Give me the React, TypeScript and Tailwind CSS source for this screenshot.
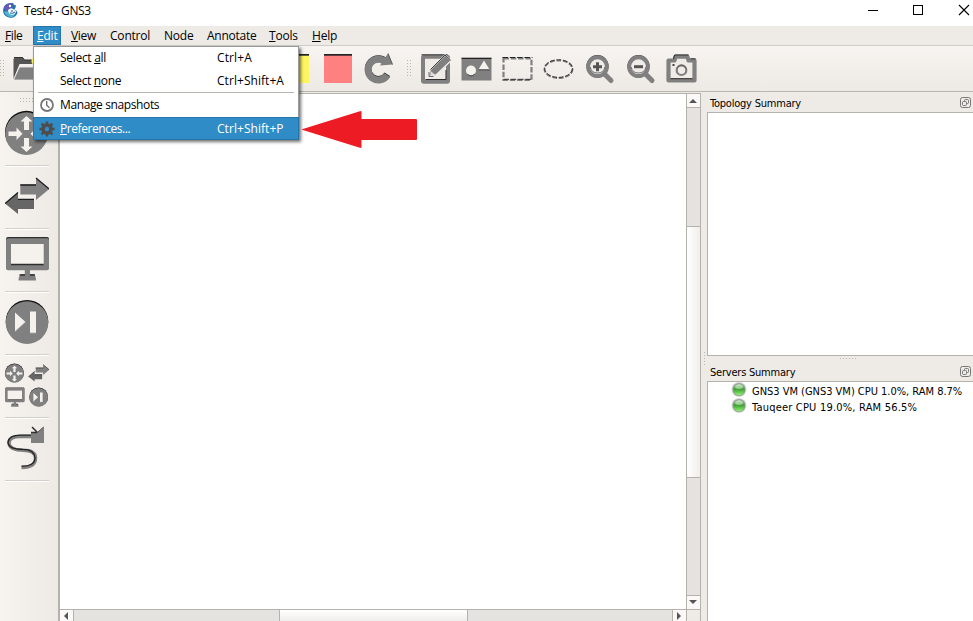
import type { ReactNode } from 'react';

const SHADOW = '#2e2e2e';
const GREY = '#808080';
const PAPER = '#f5f2ee';

interface SlotProps {
  children?: ReactNode;
}

// Toolbar slot, origin is the centre of the button
const Slot = ({ children }: SlotProps) => (
  <svg className="block h-[45px] w-[41px] shrink-0" viewBox="-20.5 -23 41 45">
    {children}
  </svg>
);

const DeviceButton = ({ children }: SlotProps) => (
  <div className="h-[63px] shrink-0 border-b border-[#d3cfca] shadow-[0_1px_0_#ffffff]">
    <svg className="block h-[62px] w-[44px]" viewBox="0 0 44 62">
      {children}
    </svg>
  </div>
);

const Dots = ({ cols, rows }: { cols: number; rows: number }) => (
  <svg className="block shrink-0" width={cols * 3} height={rows * 3} shapeRendering="crispEdges">
    {Array.from({ length: cols * rows }, (_, i) => (
      <rect key={i} x={(i % cols) * 3} y={Math.floor(i / cols) * 3} width="1" height="1" fill="#b9b5b0" />
    ))}
  </svg>
);

const inward = 'M-2.5 -17H-2.5V-11.5H-6L0 -17L6 -11.5H2.5V-3H-2.5V-11.5Z';

const Router = () => (
  <g transform="translate(21.5 30)">
    <circle r="21.5" cy="-.7" fill="#111" />
    <circle r="21.3" cy=".6" fill={GREY} />
    <path d={inward} fill={PAPER} />
    <path d={inward} fill={PAPER} transform="translate(0 2) rotate(180)" />
    <path d="M-18 -1.5H-10V-5.5L-4 .8L-10 7V3H-18ZM18 -1.5H10V-5.5L4 .8L10 7V3H18Z" fill={PAPER} />
  </g>
);

const Switch = () => (
  <g>
    <path d="M15.3 18.5H31V12L44.3 23L31 34V28.5H15.3Z" fill={GREY} />
    <path d="M15.3 19H31M31 12L44.3 23" stroke="#1c1c1c" strokeWidth="1.3" fill="none" />
    <path d="M0 37.5L13 26.5V33H29V43H13V48Z" fill="#666" />
    <path d="M0 37.5L13 26.5M13 33.3H29" stroke="#1c1c1c" strokeWidth="1.3" fill="none" />
  </g>
);

const Monitor = () => (
  <g>
    <rect x="1" y="8" width="43" height="32" rx="2" fill={SHADOW} />
    <rect x="1" y="9.3" width="43" height="32" rx="2" fill={GREY} />
    <rect x="6" y="15" width="32.7" height="20.5" fill={PAPER} />
    <path d="M6 35.5H38.7" stroke={SHADOW} strokeWidth="1.4" />
    <path d="M19.8 41H25V45H28Q31 46 31 51.5H13.5Q13.5 46 17 45H19.8Z" fill={GREY} />
    <path d="M14.5 46H20M25 46H30" stroke={SHADOW} strokeWidth="1.3" />
  </g>
);

const EndDevice = () => (
  <g>
    <circle cx="22" cy="29.3" r="21.3" fill="#111" />
    <circle cx="22" cy="30.6" r="21.3" fill={GREY} />
    <path d="M10 20.5L20.5 30L10 39.5ZM25 19.5H31V41H25Z" fill={PAPER} />
    <path d="M10 39.5L20.5 30M25 41H31" stroke="#aaa" strokeWidth=".8" />
  </g>
);

const Magnifier = ({ plus = false }: { plus?: boolean }) => (
  <Slot>
    <path d="M5.5 5.5L11.5 11.5" stroke={GREY} strokeWidth="5" strokeLinecap="round" />
    <circle cx="-2" cy="-3" r="9.3" fill="none" stroke={SHADOW} strokeWidth="3.4" />
    <circle cx="-2" cy="-2.3" r="9.4" fill="#efece8" stroke={GREY} strokeWidth="4" />
    <path d="M-9.3 -2A7.5 7.5 0 0 0 5.4 -2" fill="none" stroke="#555" strokeWidth=".8" />
    <path d={plus ? 'M-6.5 -2.3H2.5M-2 -6.8V2.2' : 'M-6.5 -2.3H2.5'} stroke="#555" strokeWidth="3" />
  </Slot>
);

const Float = () => (
  <svg className="block" width="12" height="12" fill="none" stroke="#777">
    <rect x=".5" y=".5" width="10" height="10" rx="2" />
    <rect x="4.5" y="2.5" width="4" height="4" rx="1" />
    <rect x="2.5" y="4.5" width="4" height="4" rx="1" fill="#eeebe7" />
  </svg>
);

const Led = () => (
  <svg className="block shrink-0" width="16" height="16">
    <defs>
      <linearGradient id="led" x1="0" y1="0" x2="0" y2="1">
        <stop offset="0" stopColor="#a4d8a0" />
        <stop offset=".45" stopColor="#3f9f35" />
        <stop offset="1" stopColor="#8cf56c" />
      </linearGradient>
    </defs>
    <circle cx="8" cy="7.5" r="7.3" fill="#c3c6c3" />
    <circle cx="8" cy="7.5" r="6.3" fill="#8f978f" />
    <circle cx="8" cy="7.7" r="5.6" fill="url(#led)" />
    <ellipse cx="8" cy="4.8" rx="3.8" ry="2.2" fill="#fff" opacity=".4" />
  </svg>
);

const menus = [
  { hot: 'F', rest: 'ile', box: 'w-[33px] pl-[5px] tracking-[-0.4px]' },
  { hot: 'E', rest: 'dit', box: 'w-[28px] pl-[3px] bg-[#308cc6] text-white border border-[#2574a8] leading-[17px] tracking-[-0.2px]' },
  { hot: 'V', rest: 'iew', box: 'w-[44px] pl-[10px] tracking-[-0.3px]' },
  { hot: '', rest: 'Control', box: 'w-[54px] pl-[5px] tracking-[-0.2px]' },
  { hot: '', rest: 'Node', box: 'w-[43px] pl-[5px] tracking-[-0.2px]' },
  { hot: '', rest: 'Annotate', box: 'w-[62px] pl-[5px] tracking-[-0.25px]' },
  { hot: 'T', rest: 'ools', box: 'w-[43px] pl-[5px] tracking-[-0.2px]' },
  { hot: 'H', rest: 'elp', box: 'w-[40px] pl-[5px] tracking-[-0.2px]' },
];

const ui = "font-['Open_Sans','Noto_Sans',sans-serif] text-[12px]";
const dock = "font-['DejaVu_Sans_Condensed','DejaVu_Sans',sans-serif] [font-stretch:condensed] text-[11px]";

const TitleBar = () => (
  <div className="flex h-[26px] shrink-0 items-start bg-white">
    <svg className="mt-[2px] ml-[2px] block" width="17" height="17">
      <path d="M9 1Q2 1 1 8Q1 14 7 15.5Q13 17 15.5 11Q15 8 12 8Q14 6 14 3Q12 4 11 1Z" fill="#2c6fae" />
      <path d="M2 5Q5 0 10 2L9 6L4 9Z" fill="#6a55b8" />
      <path d="M2 10Q5 16 11 15L14 11Q9 14 5 9Z" fill="#4cb6d0" />
      <path d="M6 8Q9 5 11 7L14 9Q14 12 10 13Q6 12 6 8Z" fill="#eff8fc" />
      <circle cx="8" cy="4" r="1.2" fill="#fff" />
      <path d="M9 9H11M8 11Q11 12 13 10" stroke="#27589b" fill="none" />
    </svg>
    <span className="mt-[3px] ml-[5px] leading-4 tracking-[-0.4px] whitespace-nowrap text-black">Test4 - GNS3</span>
    <svg className="ml-auto block" width="110" height="26" fill="none" stroke="#000" shapeRendering="crispEdges">
      <path d="M5 10.5H15" />
      <rect x="50.5" y="5.5" width="9" height="9" />
      <path d="M96 5L106 15M106 5L96 15" shapeRendering="auto" strokeWidth="1.1" />
    </svg>
  </div>
);

const Toolbar = () => (
  <div className="flex h-[46px] shrink-0 items-center border-b border-[#b9b5b0] bg-linear-to-b from-[#f7f4f1] to-[#edeae5]">
    <div className="w-[4px] overflow-hidden"><Dots cols={2} rows={6} /></div>
    <Slot>
      <path d="M-11 10V-10L-9 -12H-2L0 -9H12V-5H-5Z" fill="#555" />
      <path d="M-11 11L-5 -2H17L11 11Z" fill={GREY} stroke="#eee" strokeWidth=".8" />
      <path d="M-10.5 -11.5H-2L0 -9H12" stroke="#333" fill="none" />
      <circle cx="11" cy="-8" r="4" fill="#fff35f" />
    </Slot>
    <div className="w-[231px]" />
    <Slot>
      <rect x="-16" y="-14" width="28.5" height="28" fill="#fff562" />
      <rect x="-16" y="-15" width="28.5" height="1.7" fill="#222" />
    </Slot>
    <Slot>
      <rect x="-13.5" y="-14" width="28" height="28" fill="#ff8080" />
      <rect x="-13.5" y="-15" width="28" height="1.7" fill="#222" />
    </Slot>
    <Slot>
      <path d="M7.5 -6.5A10.4 10.4 0 1 0 8.8 6.2" fill="none" stroke={SHADOW} strokeWidth="6.5" transform="translate(0 -.9)" />
      <path d="M7.5 -6.5A10.4 10.4 0 1 0 8.8 6.2" fill="none" stroke={GREY} strokeWidth="7" />
      <path d="M9.5 -15.5L14 -4.5L1.5 -3.5Z" fill={GREY} />
      <path d="M9.5 -15.5L14 -4.5" stroke="#555" />
    </Slot>
    <div className="w-[16px] shrink-0 pl-[8px]"><Dots cols={2} rows={6} /></div>
    <Slot>
      <rect x="-12.5" y="-12.3" width="25" height="25" rx="1" fill="#efece8" stroke={GREY} strokeWidth="4" />
      <path d="M-14 -14.2H12M-10 10.5H10.5V1" stroke={SHADOW} strokeWidth="1" fill="none" />
      <path d="M-7 7.5L-5.5 1L9.5 -14L15.8 -8.5L.5 6Z" fill={GREY} stroke="#efece8" strokeWidth="1.3" />
      <path d="M-5 .5L9.5 -14L15 -9" fill="none" stroke="#444" />
      <path d="M-5 2L0 6L-5 7.5Z" fill="#ddd" />
      <path d="M-6.5 3V7.5H-2" stroke="#666" fill="none" />
    </Slot>
    <Slot>
      <rect x="-15" y="-10.5" width="30" height="22" fill={GREY} />
      <rect x="-15" y="-11.3" width="30" height="1.3" fill="#222" />
      <circle cx="-5.5" cy="1.5" r="5" fill={PAPER} />
      <path d="M7.5 -8.5L13 .5H2Z" fill={PAPER} />
      <path d="M2 .9H13M-9 5.3Q-5.5 8.5 -2 5.3" stroke="#444" fill="none" />
    </Slot>
    <Slot>
      <rect x="-14" y="-10.5" width="28" height="21.5" fill="none" stroke={GREY} strokeWidth="2.2" strokeDasharray="5.5 1.8" />
      <path d="M-15 -11.5H15" stroke="#222" strokeDasharray="5.5 1.8" />
      <path d="M-14 10.3H14" stroke="#333" strokeDasharray="5.5 1.8" />
    </Slot>
    <Slot>
      <ellipse cy=".2" rx="14" ry="8.8" fill="none" stroke={GREY} strokeWidth="2" strokeDasharray="4.7 1.8" />
      <ellipse cy="-.4" rx="14" ry="8.8" fill="none" stroke="#333" strokeDasharray="4.7 1.8" />
    </Slot>
    <Magnifier plus />
    <Magnifier />
    <Slot>
      <path d="M-13 -8.5H-7L-6 -12.3H6L7 -8.5H13V11.5H-13Z" fill="#efece8" stroke={GREY} strokeWidth="4.2" strokeLinejoin="round" />
      <path d="M-8 -10L-7 -14H7M-11 9.7H11M9 -10.2H14" stroke={SHADOW} fill="none" />
      <circle cy="1.2" r="4.8" fill="none" stroke={GREY} strokeWidth="2.2" />
      <path d="M-4.8 -.5Q0 -7.5 4.8 -.5" fill="none" stroke="#555" strokeWidth=".8" />
      <rect x="-9" y="-5" width="2" height="2" fill="#444" />
    </Slot>
  </div>
);

const DeviceBar = () => (
  <div className="flex w-[58px] shrink-0 flex-col bg-linear-to-r from-[#f7f4f0] to-[#edeae6] pr-[9px] pl-[5px]">
    <div className="h-[11px] shrink-0 pt-[6px] pl-[15px]"><Dots cols={5} rows={2} /></div>
    <DeviceButton><Router /></DeviceButton>
    <DeviceButton><Switch /></DeviceButton>
    <DeviceButton><Monitor /></DeviceButton>
    <DeviceButton><EndDevice /></DeviceButton>
    <DeviceButton>
      <g transform="translate(0 5) scale(.44)"><Router /></g>
      <g transform="translate(23.5 4) scale(.47)"><Switch /></g>
      <g transform="translate(0 29) scale(.44)"><Monitor /></g>
      <g transform="translate(24 29) scale(.44)"><EndDevice /></g>
    </DeviceButton>
    <DeviceButton>
      <path d="M16.5 49.5C27 49.5 30.5 46 30.5 40C30.5 34 26 32.2 18 32.2C10 32.2 4 30 4 25C4 20 9 18.5 15 18.5H27" fill="none" stroke={GREY} strokeWidth="3.4" />
      <path d="M16.5 48.2C25 48.5 30 45.5 30 40C29.5 34 26 31.4 18 31.4C10 31 3 30 3 24C4 19 9 17.2 15 17.2H27" fill="none" stroke="#222" strokeWidth="1.3" />
      <path d="M26 14H33L38.5 9H39V25H26Z" fill={GREY} />
      <path d="M27 9L32.5 14.5M26 14.5H32" fill="none" stroke="#333" strokeWidth="1.6" />
      <path d="M33 14L38.5 9" stroke="#555" strokeWidth="1" />
    </DeviceButton>
  </div>
);

const Canvas = () => (
  <div className="mt-px flex min-w-0 flex-1 flex-col border-t border-r border-l-2 border-[#b5b1ac] bg-white">
    <div className="flex min-h-0 flex-1">
      <div className="flex-1" />
      <div className="flex w-[14px] shrink-0 flex-col border-l border-[#b5b1ac] bg-[#e4e3df]">
        <div className="flex h-[14px] items-center justify-center border-b border-[#b5b1ac] bg-[#faf9f8] pr-px">
          <svg width="8" height="4"><path d="M0 4L4 0L8 4Z" fill="#555" /></svg>
        </div>
        <div className="h-[118px]" />
        <div className="h-[252px] border-y border-[#b5b1ac] bg-linear-to-r from-white to-[#f0eeeb]" />
        <div className="flex-1" />
        <div className="flex h-[14px] items-center justify-center border-t border-[#b5b1ac] bg-[#faf9f8] pr-px pb-px">
          <svg width="8" height="4"><path d="M0 0L4 4L8 0Z" fill="#555" /></svg>
        </div>
      </div>
    </div>
    <div className="flex h-[12px] shrink-0 border-t border-[#b5b1ac] bg-[#e4e3df]">
      <div className="flex w-[14px] justify-center border-r border-[#b5b1ac] bg-[#faf9f8] pt-[2px] pr-px">
        <svg width="4" height="8"><path d="M4 0L0 4L4 8Z" fill="#555" /></svg>
      </div>
      <div className="w-[205px]" />
      <div className="w-[189px] border-x border-[#b5b1ac] bg-linear-to-b from-white to-[#f0eeeb]" />
      <div className="flex-1" />
      <div className="flex w-[14px] justify-center border-l border-[#b5b1ac] bg-[#faf9f8] pt-[2px] pr-px">
        <svg width="4" height="8"><path d="M0 0L4 4L0 8Z" fill="#555" /></svg>
      </div>
      <div className="w-[14px] border-l border-[#b5b1ac] bg-[#eeebe7]" />
    </div>
  </div>
);

const DockTitle = ({ title }: { title: string }) => (
  <div className="flex h-[20px] shrink-0 items-center justify-between pt-px pr-px pl-[3px]">
    <span className="pt-[2px] leading-4 tracking-[-0.22px] whitespace-nowrap">{title}</span>
    <Float />
  </div>
);

const Docks = () => (
  <div className={`flex w-[272px] shrink-0 text-black ${dock}`}>
    <div className="w-[6px] pt-[260px] pl-[3px]"><Dots cols={1} rows={5} /></div>
    <div className="flex min-w-0 flex-1 flex-col">
      <DockTitle title="Topology Summary" />
      <div className="h-[244px] shrink-0 border-y border-l border-[#b5b1ac] bg-white" />
      <div className="flex h-[5px] shrink-0 justify-center pt-[2px] pl-[18px]"><Dots cols={6} rows={1} /></div>
      <DockTitle title="Servers Summary" />
      <div className="flex-1 border-t border-l border-[#b5b1ac] bg-white pl-[23px]">
        <div className="flex h-[16px] items-center gap-[5px]">
          <Led />
          <span className="pt-[3px] leading-4 tracking-[-0.02px] whitespace-nowrap">GNS3 VM (GNS3 VM) CPU 1.0%, RAM 8.7%</span>
        </div>
        <div className="flex h-[16px] items-center gap-[5px]">
          <Led />
          <span className="pt-[3px] leading-4 tracking-[0.2px] whitespace-nowrap">Tauqeer CPU 19.0%, RAM 56.5%</span>
        </div>
      </div>
    </div>
  </div>
);

const EditMenu = () => (
  <div className="absolute top-[46px] left-[33px] w-[266px] border border-[#999] bg-white text-black shadow-[2px_2px_3px_rgba(0,0,0,0.55)]">
    <div className="flex h-[22px] items-center pl-[26px]">
      <span className="w-[157px] tracking-[-0.3px]">Select <u>a</u>ll</span>
      <span className="tracking-[0.1px]">Ctrl+A</span>
    </div>
    <div className="flex h-[23px] items-center pl-[26px]">
      <span className="w-[157px] tracking-[-0.35px]">Select <u>n</u>one</span>
      <span className="tracking-[0.05px]">Ctrl+Shift+A</span>
    </div>
    <div className="mx-[4px] h-px bg-[#b9b5b0]" />
    <div className="flex h-[24px] items-center pl-[5px]">
      <svg className="mr-[5px] block" width="16" height="16" fill="none">
        <circle cx="8" cy="8" r="6" stroke="#777" strokeWidth="1.8" />
        <path d="M7.7 4V8.3L10.5 10.8" stroke="#666" strokeWidth="1.3" />
      </svg>
      <span className="tracking-[-0.38px]">Manage snapshots</span>
    </div>
    <div className="-mx-px -mb-px flex h-[23px] items-center border border-[#2574a8] bg-[#308cc6] pl-[5px] text-white">
      <svg className="mr-[5px] block" width="16" height="16" viewBox="-8 -8 16 16">
        <circle r="4" fill="none" stroke="#4d4d4d" strokeWidth="3.6" />
        <path d="M0 -7.6V-4M0 7.6V4M-7.6 0H-4M7.6 0H4M-5.4 -5.4L-3 -3M5.4 5.4L3 3M-5.4 5.4L-3 3M5.4 -5.4L3 -3" stroke="#4d4d4d" strokeWidth="2.6" />
      </svg>
      <span className="w-[157px] tracking-[-0.43px]"><u>P</u>references...</span>
      <span className="tracking-[0.05px]">Ctrl+Shift+P</span>
    </div>
  </div>
);

export default function App() {
  return (
    <div className={`relative flex h-[621px] w-[973px] flex-col overflow-hidden bg-[#eeebe7] ${ui}`}>
      <TitleBar />
      <div className="flex h-[20px] shrink-0 border-b border-[#d0ccc8] leading-[19px] text-black">
        {menus.map((m) => (
          <div key={m.rest} className={`shrink-0 whitespace-nowrap ${m.box}`}>
            {m.hot && <u>{m.hot}</u>}{m.rest}
          </div>
        ))}
      </div>
      <Toolbar />
      <div className="flex min-h-0 flex-1">
        <DeviceBar />
        <Canvas />
        <Docks />
      </div>
      <EditMenu />
      <svg className="absolute top-[110px] left-[302px] block" width="116" height="39">
        <path d="M-1 19.5L57 1.5L59.5 1V9H114Q115 9 115 10V29Q115 30 114 30H59.5V38L57 37.5Z" fill="#ed1c24" />
      </svg>
    </div>
  );
}
